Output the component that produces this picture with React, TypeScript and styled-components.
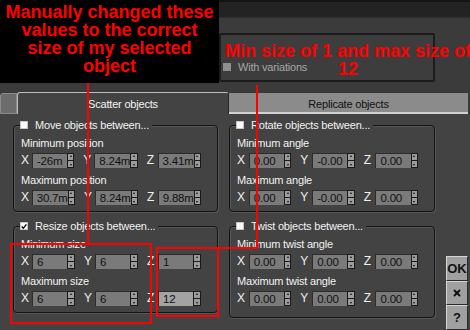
import React from 'react';
import styled, { createGlobalStyle } from 'styled-components';
import { X as CloseIcon } from 'lucide-react';

const GlobalStyle = createGlobalStyle`
    html, body {
        margin: 0;
        padding: 0;
        background: #434343;
    }
    body {
        font-family: "Liberation Sans", Arial, sans-serif;
    }
    * {
        box-sizing: border-box;
    }
`;

const Window = styled.div`
    position: relative;
    width: 470px;
    height: 330px;
    overflow: hidden;
    background: #434343;
    color: #f2f2f2;
    font-size: 11px;
    letter-spacing: -0.2px;
`;

const TitleBar = styled.div`
    height: 18px;
    background: #232323;
    border-top: 2px solid #141414;
    border-bottom: 1px solid #2e2e2e;
`;

const OptionsStrip = styled.div`
    height: 74px;
    background: #3b3b3b;
    padding-top: 15px;
`;

const VariationsBox = styled.div`
    margin-left: 219px;
    width: 216px;
    height: 49px;
    border: 2px solid #1c1c1c;
    border-radius: 2px;
    background: #3d3d3d;
    display: flex;
    align-items: flex-end;
    gap: 7px;
    padding: 0 0 7px 2px;
    color: #a6a6a6;
`;

const GreyCheck = styled.span`
    width: 8px;
    height: 8px;
    background: #8f8f8f;
    margin-bottom: 2px;
`;

const TabRow = styled.div`
    height: 22px;
    display: flex;
    align-items: flex-end;
    background: #393939;
`;

const TabStub = styled.div`
    width: 17px;
    height: 21px;
    background: #6c6c6c;
    border: 1px solid #8c8c8c;
    border-radius: 3px 0 0 0;
`;

const Tab = styled.div<{ $active?: boolean }>`
    height: ${({ $active }) => ($active ? 22 : 21)}px;
    width: ${({ $active }) => ($active ? 212 : 239)}px;
    display: flex;
    align-items: center;
    justify-content: center;
    background: ${({ $active }) => ($active ? '#434343' : '#8b8b8b')};
    color: ${({ $active }) => ($active ? '#f4f4f4' : '#111')};
    border-top: ${({ $active }) => ($active ? '1px solid #bdbdbd' : 'none')};
    border-left: ${({ $active }) => ($active ? '1px solid #bdbdbd' : 'none')};
    border-right: ${({ $active }) => ($active ? '1px solid #262626' : 'none')};
    border-bottom: ${({ $active }) => ($active ? 'none' : '2px solid #d2d2d2')};
    border-radius: ${({ $active }) => ($active ? '3px 3px 0 0' : '0')};
    padding-top: ${({ $active }) => ($active ? 0 : 2)}px;
`;

const Body = styled.div`
    height: 216px;
    display: flex;
`;

const Panel = styled.div`
    width: 445px;
    padding: 11px 0 0 13px;
    display: grid;
    grid-template-columns: 205px 206px;
    column-gap: 11px;
    row-gap: 14px;
    align-content: start;
    align-items: start;
`;

const GroupBox = styled.div<{ $padBottom?: number }>`
    border: 1px solid #141414;
    border-radius: 4px;
    box-shadow: 1px 1px 0 #565656, inset 1px 1px 0 #565656;
    padding: 0 7px ${({ $padBottom }) => $padBottom ?? 6}px;
`;

const GroupTitle = styled.div`
    display: flex;
    align-items: center;
    gap: 7px;
    width: max-content;
    height: 14px;
    margin: -8px 0 0 -1px;
    padding-right: 3px;
    background: #434343;
`;

const CheckBox = styled.span`
    width: 8px;
    height: 8px;
    background: #fafafa;
    border: 1px solid #c4c4c4;
    display: flex;
    align-items: center;
    justify-content: center;
`;

const SubLabel = styled.div<{ $gap: number }>`
    height: 14px;
    line-height: 14px;
    margin-top: ${({ $gap }) => $gap}px;
`;

const Row = styled.div`
    display: flex;
    height: 15px;
    margin-top: 3px;
`;

const Axis = styled.span<{ $wide?: boolean }>`
    width: ${({ $wide }) => ($wide ? 13 : 12)}px;
    font-size: 12px;
    line-height: 15px;
    color: #f0f0f0;
`;

const Field = styled.span<{ $focus?: boolean }>`
    width: 38px;
    background: ${({ $focus }) => ($focus ? '#a3a3a3' : '#7a7a7a')};
    border-top: 1px solid #2c2c2c;
    border-left: 1px solid #2c2c2c;
    color: #111;
    font-size: 11.5px;
    line-height: 14px;
    padding-left: 4px;
`;

const Spinner = styled.span`
    width: 8px;
    margin-right: 9px;
    border: 1px solid #1a1a1a;
    background: #1a1a1a;
    display: flex;
    flex-direction: column;
    gap: 1px;
`;

const SpinHalf = styled.span<{ $down?: boolean }>`
    flex: 1;
    background: #9c9c9c;
    display: flex;
    justify-content: center;
    align-items: ${({ $down }) => ($down ? 'flex-end' : 'flex-start')};
    padding: 1px 0;

    &::after {
        content: '';
        border-left: 1.5px solid transparent;
        border-right: 1.5px solid transparent;
        border-bottom: ${({ $down }) => ($down ? 'none' : '2px solid #111')};
        border-top: ${({ $down }) => ($down ? '2px solid #111' : 'none')};
    }
`;

const Side = styled.div`
    width: 25px;
    padding: 0 2px 0 1px;
    display: flex;
    flex-direction: column;
    justify-content: flex-end;
`;

const SideButton = styled.div<{ $h: number }>`
    height: ${({ $h }) => $h}px;
    background: #a0a0a0;
    border: 1px solid;
    border-color: #d6d6d6 #2a2a2a #2a2a2a #d6d6d6;
    color: #111;
    font-size: 13px;
    font-weight: bold;
    letter-spacing: 0;
    display: flex;
    align-items: center;
    justify-content: center;
`;

const NoteBox = styled.div`
    position: absolute;
    left: 0;
    top: 0;
    width: 219px;
    height: 83px;
    background: #000;
    color: #ff0000;
    font-size: 18px;
    font-weight: bold;
    line-height: 18px;
    letter-spacing: 0;
    text-align: center;
    padding-top: 3px;
`;

const NoteText = styled.div`
    position: absolute;
    left: 223px;
    top: 42px;
    width: 250px;
    color: #ff0000;
    font-size: 18px;
    font-weight: bold;
    line-height: 18px;
    letter-spacing: 0;
    text-align: center;
    white-space: nowrap;
`;

const Mark = styled.div<{ $x: number; $y: number; $w: number; $h: number; $frame?: boolean }>`
    position: absolute;
    left: ${({ $x }) => $x}px;
    top: ${({ $y }) => $y}px;
    width: ${({ $w }) => $w}px;
    height: ${({ $h }) => $h}px;
    background: ${({ $frame }) => ($frame ? 'transparent' : '#ff0000')};
    border: ${({ $frame }) => ($frame ? '2px solid #ff0000' : 'none')};
`;

interface Value {
    text: string;
    focus?: boolean;
}

interface GroupProps {
    title: string;
    checked?: boolean;
    minLabel: string;
    maxLabel: string;
    rows: Value[][];
    wide?: boolean;
    padBottom?: number;
}

const Tick = () => (
    <svg width="7" height="7" viewBox="0 0 7 7">
        <path d="M0.8 3.6 L2.7 5.6 L6.3 1" stroke="#000" strokeWidth="1.6" fill="none" />
    </svg>
);

const ValueRow: React.FC<{ values: Value[]; wide?: boolean }> = ({ values, wide }) => (
    <Row>
        {['X', 'Y', 'Z'].map((axis, i) => (
            <React.Fragment key={axis}>
                <Axis $wide={wide}>{axis}</Axis>
                <Field $focus={values[i].focus}>{values[i].text}</Field>
                <Spinner>
                    <SpinHalf />
                    <SpinHalf $down />
                </Spinner>
            </React.Fragment>
        ))}
    </Row>
);

const Group: React.FC<GroupProps> = ({ title, checked, minLabel, maxLabel, rows, wide, padBottom }) => (
    <GroupBox $padBottom={padBottom}>
        <GroupTitle>
            <CheckBox>{checked && <Tick />}</CheckBox>
            {title}
        </GroupTitle>
        <SubLabel $gap={4}>{minLabel}</SubLabel>
        <ValueRow values={rows[0]} wide={wide} />
        <SubLabel $gap={5}>{maxLabel}</SubLabel>
        <ValueRow values={rows[1]} wide={wide} />
    </GroupBox>
);

const v = (...items: string[]): Value[] => items.map(text => ({ text }));

const App: React.FC = () => (
    <Window>
        <GlobalStyle />
        <TitleBar />
        <OptionsStrip>
            <VariationsBox>
                <GreyCheck />
                With variations
            </VariationsBox>
        </OptionsStrip>
        <TabRow>
            <TabStub />
            <Tab $active>Scatter objects</Tab>
            <Tab>Replicate objects</Tab>
        </TabRow>
        <Body>
            <Panel>
                <Group
                    title="Move objects between..."
                    minLabel="Minimum position"
                    maxLabel="Maximum position"
                    rows={[v('-26m', '8.24m', '3.41m'), v('30.7m', '8.24m', '9.88m')]}
                />
                <Group
                    title="Rotate objects between..."
                    minLabel="Minimum angle"
                    maxLabel="Maximum angle"
                    wide
                    rows={[v('0.00', '-0.00', '0.00'), v('0.00', '-0.00', '0.00')]}
                />
                <Group
                    title="Resize objects between..."
                    checked
                    minLabel="Minimum size"
                    maxLabel="Maximum size"
                    rows={[v('6', '6', '1'), [{ text: '6' }, { text: '6' }, { text: '12', focus: true }]]}
                />
                <Group
                    title="Twist objects between..."
                    minLabel="Minimum twist angle"
                    maxLabel="Maximum twist angle"
                    wide
                    padBottom={11}
                    rows={[v('0.00', '0.00', '0.00'), v('0.00', '0.00', '0.00')]}
                />
            </Panel>
            <Side>
                <SideButton $h={25}>OK</SideButton>
                <SideButton $h={24}>
                    <CloseIcon size={10} strokeWidth={4.5} color="#111" />
                </SideButton>
                <SideButton $h={25}>?</SideButton>
            </Side>
        </Body>

        <NoteBox>
            Manually changed these
            <br />
            values to the correct
            <br />
            size of my selected
            <br />
            object
        </NoteBox>
        <NoteText>
            Min size of 1 and max size of
            <br />
            12
        </NoteText>
        <Mark $x={87} $y={83} $w={2} $h={161} />
        <Mark $x={10} $y={243} $w={142} $h={81} $frame />
        <Mark $x={256} $y={85} $w={2} $h={164} />
        <Mark $x={217} $y={247} $w={41} $h={2} />
        <Mark $x={156} $y={247} $w={63} $h={70} $frame />
    </Window>
);

export default App;
